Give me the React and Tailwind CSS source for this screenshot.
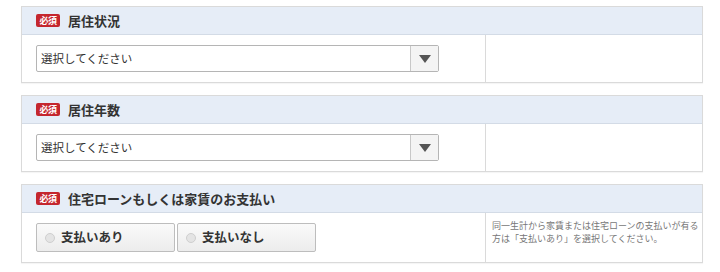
import React from "react";

const font = { fontFamily: '"Noto Sans CJK JP", "Noto Sans", sans-serif' };

function Badge() {
  return (
    <span className="inline-flex items-center justify-center w-[24px] h-[13px] rounded-[2px] bg-[#c4262e] text-white text-[9px] font-bold leading-none tracking-[-0.5px]">
      必須
    </span>
  );
}

function Header({ title }) {
  return (
    <div className="h-[28px] flex items-center gap-[8px] pl-[14px] bg-[#e6edf7] border-b border-[#d3dbe6]">
      <Badge />
      <span className="text-[13px] font-bold text-[#333]">{title}</span>
    </div>
  );
}

function Select() {
  return (
    <div className="w-[403px] h-[27px] flex border border-[#b5b5b5] rounded-[2px] bg-white">
      <div className="flex-1 flex items-center pl-[4px] text-[11.5px] text-[#333]">選択してください</div>
      <div className="w-[28px] flex items-center justify-center border-l border-[#c8c8c8] bg-[#f4f4f4]">
        <svg width="12" height="8" viewBox="0 0 12 8">
          <path d="M0 0 H12 L6 8 Z" fill="#555" />
        </svg>
      </div>
    </div>
  );
}

function Radio({ label }) {
  return (
    <div className="w-[139px] h-[29px] flex items-center gap-[6px] pl-[8px] border border-[#bdbdbd] rounded-[2px] bg-gradient-to-b from-[#fafafa] to-[#ececec]">
      <span className="w-[10px] h-[10px] rounded-full border border-[#cfcfcf] bg-[#e4e4e4]" />
      <span className="text-[12.5px] font-bold text-[#333]">{label}</span>
    </div>
  );
}

function Block({ title, children, note }) {
  return (
    <div className="w-[682px] border border-[#dadada] shadow-[0_1px_1px_rgba(0,0,0,0.04)] bg-white">
      <Header title={title} />
      <div className="flex">
        <div className="w-[463px] py-[10px] pl-[14px]">{children}</div>
        <div className="flex-1 border-l border-[#dadada] pl-[6px] pt-[6px] text-[9px] leading-[13px] text-[#777]">
          {note}
        </div>
      </div>
    </div>
  );
}

export default function App() {
  return (
    <div className="w-[720px] h-[272px] bg-white pt-[6px] pl-[21px] flex flex-col gap-[12px]" style={font}>
      <Block title="居住状況">
        <Select />
      </Block>
      <Block title="居住年数">
        <Select />
      </Block>
      <Block
        title="住宅ローンもしくは家賃のお支払い"
        note={
          <>
            同一生計から家賃または住宅ローンの支払いが有る
            <br />
            方は「支払いあり」を選択してください。
          </>
        }
      >
        <div className="flex gap-[2px]">
          <Radio label="支払いあり" />
          <Radio label="支払いなし" />
        </div>
      </Block>
    </div>
  );
}
